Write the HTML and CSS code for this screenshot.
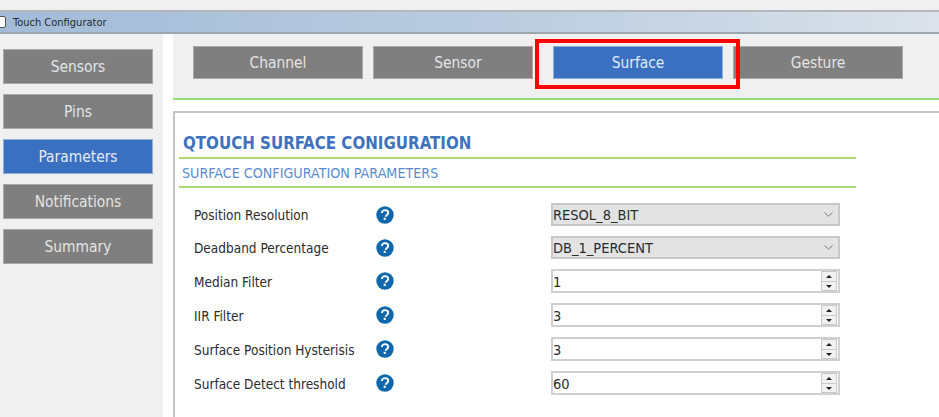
FILE: index.html
```html
<!DOCTYPE html>
<html lang="en">
<head>
<meta charset="utf-8">
<title>Touch Configurator</title>
<link rel="stylesheet" href="styles.css">
</head>
<body>
<div class="top-band"></div>
<header class="titlebar"><span class="win-icon"></span><span class="win-title">Touch Configurator</span></header>
<div class="main">
  <nav class="sidebar">
    <div class="btn side">Sensors</div>
    <div class="btn side">Pins</div>
    <div class="btn side active">Parameters</div>
    <div class="btn side">Notifications</div>
    <div class="btn side">Summary</div>
  </nav>
  <section class="content">
    <div class="tabs">
      <div class="btn tab">Channel</div>
      <div class="btn tab narrow">Sensor</div>
      <div class="btn tab active current">Surface<span class="highlight"></span></div>
      <div class="btn tab">Gesture</div>
    </div>
    <div class="panel">
      <div class="panel-inner">
        <h1 class="heading">QTOUCH SURFACE CONIGURATION</h1>
        <h2 class="subheading">SURFACE CONFIGURATION PARAMETERS</h2>
        <div class="form">
          <div class="row"><span class="label">Position Resolution</span><svg class="help" viewBox="0 0 18 18"><circle cx="9" cy="9" r="8.7" fill="#0f68ab"/><path d="M5.9 7.1c0-1.9 1.3-3 3.2-3s3.1 1 3.1 2.6c0 1.2-.6 1.8-1.5 2.5-.7.5-1 .8-1 1.6" fill="none" stroke="#fff" stroke-width="1.9"/><rect x="7.7" y="11.8" width="2.1" height="2.1" fill="#fff"/></svg><div class="field select"><span class="value">RESOL_8_BIT</span><svg class="chev" viewBox="0 0 9 5"><path d="M.5.5 4.5 4.2 8.5.5" fill="none" stroke="#7b7b7b"/></svg></div></div>
          <div class="row"><span class="label">Deadband Percentage</span><svg class="help" viewBox="0 0 18 18"><circle cx="9" cy="9" r="8.7" fill="#0f68ab"/><path d="M5.9 7.1c0-1.9 1.3-3 3.2-3s3.1 1 3.1 2.6c0 1.2-.6 1.8-1.5 2.5-.7.5-1 .8-1 1.6" fill="none" stroke="#fff" stroke-width="1.9"/><rect x="7.7" y="11.8" width="2.1" height="2.1" fill="#fff"/></svg><div class="field select"><span class="value">DB_1_PERCENT</span><svg class="chev" viewBox="0 0 9 5"><path d="M.5.5 4.5 4.2 8.5.5" fill="none" stroke="#7b7b7b"/></svg></div></div>
          <div class="row tall"><span class="label">Median Filter</span><svg class="help" viewBox="0 0 18 18"><circle cx="9" cy="9" r="8.7" fill="#0f68ab"/><path d="M5.9 7.1c0-1.9 1.3-3 3.2-3s3.1 1 3.1 2.6c0 1.2-.6 1.8-1.5 2.5-.7.5-1 .8-1 1.6" fill="none" stroke="#fff" stroke-width="1.9"/><rect x="7.7" y="11.8" width="2.1" height="2.1" fill="#fff"/></svg><div class="field"><span class="value">1</span><div class="spin"><i class="up"></i><i class="down"></i></div></div></div>
          <div class="row tall"><span class="label">IIR Filter</span><svg class="help" viewBox="0 0 18 18"><circle cx="9" cy="9" r="8.7" fill="#0f68ab"/><path d="M5.9 7.1c0-1.9 1.3-3 3.2-3s3.1 1 3.1 2.6c0 1.2-.6 1.8-1.5 2.5-.7.5-1 .8-1 1.6" fill="none" stroke="#fff" stroke-width="1.9"/><rect x="7.7" y="11.8" width="2.1" height="2.1" fill="#fff"/></svg><div class="field"><span class="value">3</span><div class="spin"><i class="up"></i><i class="down"></i></div></div></div>
          <div class="row tall"><span class="label">Surface Position Hysterisis</span><svg class="help" viewBox="0 0 18 18"><circle cx="9" cy="9" r="8.7" fill="#0f68ab"/><path d="M5.9 7.1c0-1.9 1.3-3 3.2-3s3.1 1 3.1 2.6c0 1.2-.6 1.8-1.5 2.5-.7.5-1 .8-1 1.6" fill="none" stroke="#fff" stroke-width="1.9"/><rect x="7.7" y="11.8" width="2.1" height="2.1" fill="#fff"/></svg><div class="field"><span class="value">3</span><div class="spin"><i class="up"></i><i class="down"></i></div></div></div>
          <div class="row tall"><span class="label">Surface Detect threshold</span><svg class="help" viewBox="0 0 18 18"><circle cx="9" cy="9" r="8.7" fill="#0f68ab"/><path d="M5.9 7.1c0-1.9 1.3-3 3.2-3s3.1 1 3.1 2.6c0 1.2-.6 1.8-1.5 2.5-.7.5-1 .8-1 1.6" fill="none" stroke="#fff" stroke-width="1.9"/><rect x="7.7" y="11.8" width="2.1" height="2.1" fill="#fff"/></svg><div class="field"><span class="value">60</span><div class="spin"><i class="up"></i><i class="down"></i></div></div></div>
        </div>
      </div>
    </div>
  </section>
</div>
</body>
</html>
```
FILE: styles.css
```css
* { box-sizing: border-box; }
html, body { margin: 0; padding: 0; }
body {
  width: 939px;
  height: 417px;
  overflow: hidden;
  background: #fff;
  font-family: "DejaVu Sans Condensed", "DejaVu Sans", sans-serif;
  font-stretch: condensed;
  color: #2c2c2c;
}
.top-band { height: 10px; background: #f0f0f0; }
.titlebar {
  height: 24px;
  border-top: 2px solid #b3b6ba;
  border-bottom: 2px solid #9ea6b0;
  background: linear-gradient(90deg, #a2bbd8 0%, #bccde0 55%, #dbe2ea 100%);
  display: flex;
  align-items: center;
  overflow: hidden;
  font-size: 11px;
}
.win-icon {
  width: 9px;
  height: 12px;
  margin-left: -3px;
  margin-right: 7px;
  background: #fff;
  border: 1px solid #555;
  border-radius: 2px;
  flex: none;
}
.win-title { color: #1e2a33; }
.main { display: flex; height: 383px; }
.sidebar {
  width: 163px;
  background: #f0f0f0;
  padding: 15px 10px 0 3px;
  display: flex;
  flex-direction: column;
  gap: 10px;
}
.btn {
  display: flex;
  align-items: center;
  justify-content: center;
  background: #7f7f7f;
  border: 1px solid #a9a9a9;
  color: #e4e4e4;
  font-size: 15.4px;
  flex: none;
}
.btn.active { background: #3a70bf; border-color: #8fb0dc; color: #e3ebf6; }
.side { height: 35px; }
.content { flex: 1; min-width: 0; padding-left: 10px; }
.tabs {
  height: 66px;
  background: #f0f0f0;
  border-bottom: 2px solid #93dc77;
  padding: 12px 0 0 20px;
  display: flex;
  align-items: flex-start;
}
.tab { width: 170px; height: 33px; margin-right: 10px; }
.tab.narrow { width: 160px; margin-right: 20px; padding-left: 10px; }
.current { position: relative; }
.highlight {
  position: absolute;
  left: -19px;
  top: -8px;
  width: 205px;
  height: 50px;
  border: 4px solid #fe0000;
}
.panel {
  margin-top: 11px;
  border-top: 2px solid #c4c4c4;
  border-left: 2px solid #c4c4c4;
  height: 306px;
}
.panel-inner { padding: 18px 0 0 4px; width: 681px; }
.heading {
  margin: 0;
  height: 28px;
  border-bottom: 2px solid #b0d678;
  color: #3f72bc;
  font-size: 16.75px;
  font-weight: 700;
  line-height: 24px;
  padding-left: 4px;
}
.subheading {
  margin: 0;
  height: 29px;
  border-bottom: 2px solid #b0d678;
  color: #5c8bd0;
  font-size: 14.2px;
  font-weight: 400;
  line-height: 29px;
  padding-left: 3px;
}
.form { padding: 15px 0 0 15px; display: flex; flex-direction: column; gap: 10px; }
.row { display: flex; align-items: center; height: 23px; }
.row.tall { height: 24px; }
.label { width: 182px; font-size: 13.5px; padding-top: 1px; color: #2c2c2c; flex: none; }
.help { width: 18px; height: 18px; flex: none; margin-right: 157px; }
.field {
  width: 289px;
  height: 100%;
  flex: none;
  display: flex;
  align-items: center;
  justify-content: space-between;
  border: 2px solid #cfcfd4;
  background: #fff;
  font-size: 14.5px;
  padding-left: 0;
  color: #2c2c2c;
}
.value { padding-top: 1px; }
.select { background: #e3e3e3; border-color: #c8c8c8; padding-right: 5px; }
.chev { width: 9px; height: 5px; }
.spin {
  width: 16px;
  height: 20px;
  margin-right: 1px;
  display: flex;
  flex-direction: column;
  gap: 1px;
  background: #c9c9c9;
  border: 1px solid #c9c9c9;
}
.spin i {
  flex: 1;
  background: #f1f1f1;
  position: relative;
}
.spin i::after {
  content: "";
  position: absolute;
  left: 4px;
  top: 3px;
  border-left: 3px solid transparent;
  border-right: 3px solid transparent;
}
.spin .up::after { border-bottom: 3px solid #222; }
.spin .down::after { border-top: 3px solid #222; }
```
